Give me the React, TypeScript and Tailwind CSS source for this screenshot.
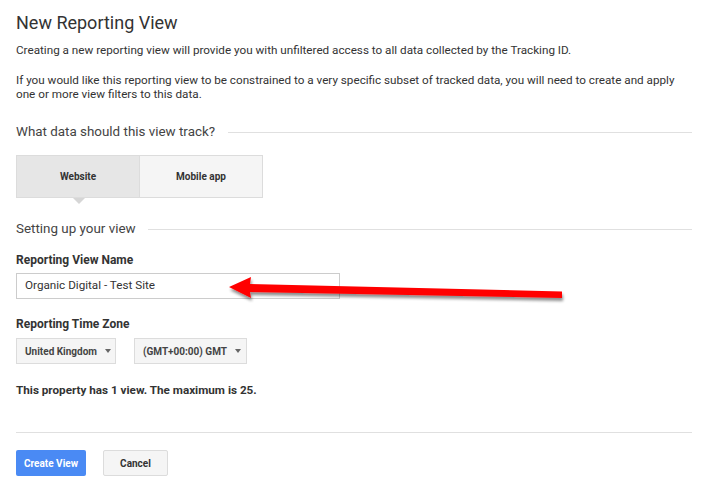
import React from "react";

export default function App() {
  return (
    <div className="relative w-[714px] h-[488px] bg-white overflow-hidden font-['Roboto',sans-serif] text-[#333]">
      <div className="pl-4 pr-[22px]">
        <h1 className="pt-[11px] text-[18px] leading-[24px] font-normal text-[#333]">New Reporting View</h1>
        <p className="mt-[8px] text-[11.7px] leading-[15px] text-[#333]">
          Creating a new reporting view will provide you with unfiltered access to all data collected by the Tracking ID.
        </p>
        <p className="mt-[15px] text-[11.7px] leading-[14px] text-[#333] w-[676px]">
          If you would like this reporting view to be constrained to a very specific subset of tracked data, you will need to create and apply one or more view filters to this data.
        </p>

        <div className="mt-[22px] flex items-center gap-[13px]">
          <span className="text-[13.4px] leading-[18px] text-[#444] whitespace-nowrap">What data should this view track?</span>
          <div className="flex-1 h-px bg-[#e0e0e0]" />
        </div>

        <div className="mt-[14px] flex w-[247px] h-[43px] border border-[#dcdcdc]">
          <div className="relative w-[123px] bg-[#e6e6e6] border-r border-[#dcdcdc] flex items-center justify-center text-[10px] font-bold text-[#333]">
            Website
            <span className="absolute left-[56px] top-[42px] w-0 h-0 border-l-[6px] border-r-[6px] border-t-[6px] border-l-transparent border-r-transparent border-t-[#d6d6d6]" />
          </div>
          <div className="flex-1 bg-[#f5f5f5] flex items-center justify-center text-[10px] font-bold text-[#333]">
            Mobile app
          </div>
        </div>

        <div className="mt-[22px] flex items-center gap-[12px]">
          <span className="text-[13.4px] leading-[18px] text-[#444] whitespace-nowrap">Setting up your view</span>
          <div className="flex-1 h-px bg-[#e0e0e0]" />
        </div>

        <div className="mt-[14px] text-[12px] leading-[16px] font-bold text-[#333]">Reporting View Name</div>
        <div className="mt-[5px] w-[324px] h-[26px] border border-[#cccccc] flex items-center pl-[8px] text-[11.7px] text-[#333]">
          Organic Digital - Test Site
        </div>

        <div className="mt-[17px] text-[12px] leading-[16px] font-bold text-[#333]">Reporting Time Zone</div>
        <div className="mt-[6px] flex gap-[18px]">
          <div className="w-[100px] h-[26px] bg-[#f5f5f5] border border-[#dcdcdc] flex items-center pl-[8px] gap-[8px] text-[10px] font-bold text-[#444] whitespace-nowrap">
            United Kingdom
            <span className="w-0 h-0 border-l-[3px] border-r-[3px] border-t-[4px] border-l-transparent border-r-transparent border-t-[#666]" />
          </div>
          <div className="w-[113px] h-[26px] bg-[#f5f5f5] border border-[#dcdcdc] flex items-center pl-[8px] gap-[8px] text-[10px] font-bold text-[#444] whitespace-nowrap">
            (GMT+00:00) GMT
            <span className="w-0 h-0 border-l-[3px] border-r-[3px] border-t-[4px] border-l-transparent border-r-transparent border-t-[#666]" />
          </div>
        </div>

        <div className="mt-[18px] text-[11.7px] leading-[16px] font-bold text-[#333]">
          This property has 1 view. The maximum is 25.
        </div>

        <div className="mt-[34px] h-px bg-[#e0e0e0]" />

        <div className="mt-[17px] flex gap-[17px]">
          <button className="w-[70px] h-[26px] bg-[#4a8af4] rounded-[2px] text-white text-[10px] font-bold">Create View</button>
          <button className="w-[65px] h-[26px] bg-[#f5f5f5] border border-[#dcdcdc] rounded-[2px] text-[#333] text-[10px] font-bold">Cancel</button>
        </div>
      </div>

      <svg className="absolute left-0 top-0 pointer-events-none" width="714" height="488" viewBox="0 0 714 488">
        <defs>
          <filter id="sh" x="-10%" y="-50%" width="120%" height="250%">
            <feGaussianBlur in="SourceAlpha" stdDeviation="1.6" />
            <feOffset dx="1" dy="3" result="b" />
            <feComponentTransfer>
              <feFuncA type="linear" slope="0.45" />
            </feComponentTransfer>
            <feMerge>
              <feMergeNode />
              <feMergeNode in="SourceGraphic" />
            </feMerge>
          </filter>
        </defs>
        <polygon
          points="229,287 251,277 250,284 562,291.5 562,298 250,292 251,298"
          fill="#ff0000"
          filter="url(#sh)"
        />
      </svg>
    </div>
  );
}
